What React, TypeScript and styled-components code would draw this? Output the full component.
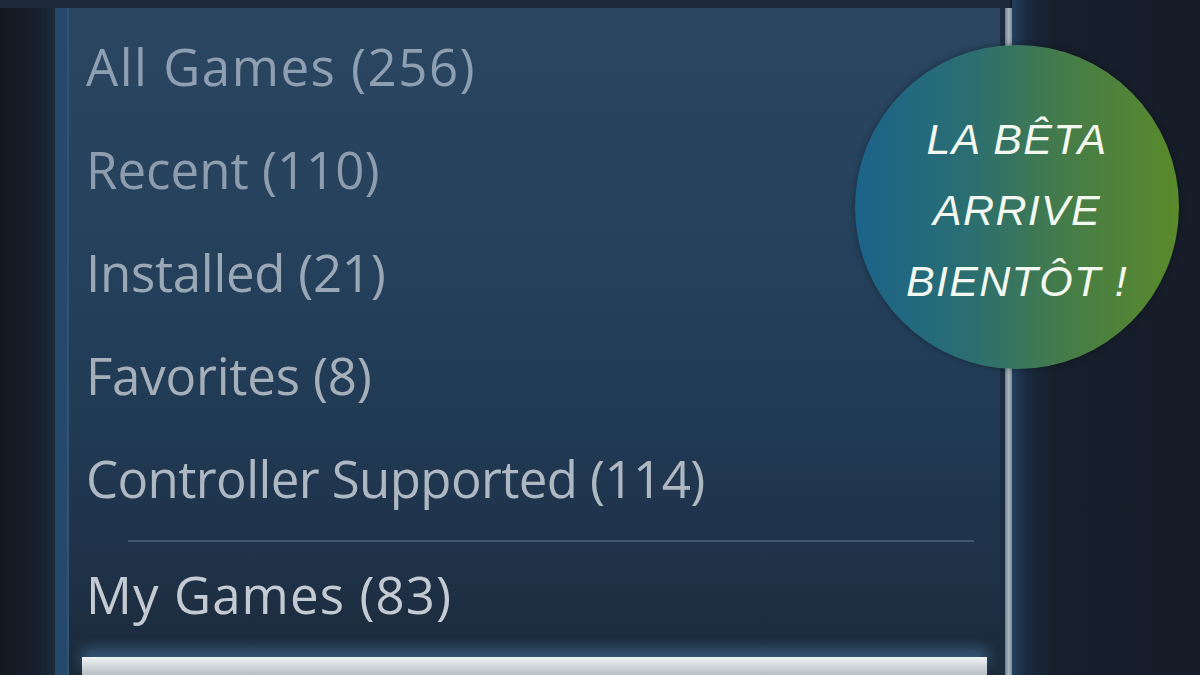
import styled, { createGlobalStyle } from "styled-components";

const GlobalStyle = createGlobalStyle`
    html, body {
        margin: 0;
        padding: 0;
        background: #141a24;
    }
`;

const Page = styled.div`
    position: relative;
    display: grid;
    grid-template-columns: 55px 945px 5px 7px 1fr;
    width: 1200px;
    height: 675px;
    overflow: hidden;
    background: #141a24;
    font-family: "Open Sans", "Noto Sans", sans-serif;
`;

const LeftGutter = styled.div`
    background: linear-gradient(90deg, #121821 0%, #17202d 70%, #1d2b3c 100%);
`;

const Panel = styled.section`
    display: flex;
    flex-direction: column;
    margin-top: 8px;
    padding: 6px 0 0 19px;
    border-left: 12px solid #26486a;
    box-shadow: inset 2px 0 0 #2e5478;
    background: linear-gradient(180deg, #2a4660 0%, #25415b 35%, #213b55 60%, #1f334a 80%, #1c2a3a 100%);
`;

const TopBand = styled.div`
    position: absolute;
    left: 0;
    top: 0;
    width: 1010px;
    height: 8px;
    background: #1f2b3a;
`;

const Row = styled.div<{ $tone: string; $spacing?: number }>`
    display: flex;
    align-items: center;
    height: 103px;
    font-size: 51px;
    letter-spacing: ${(p) => p.$spacing ?? 0}px;
    color: ${(p) => p.$tone};
    white-space: nowrap;
`;

const Separator = styled.hr`
    margin: 11px 26px 0 42px;
    border: none;
    height: 2px;
    background: #44586c;
`;

const Footer = styled.div`
    margin: auto 13px 0 -4px;
    height: 18px;
    background: linear-gradient(180deg, #f1f4f6 0%, #d9dde1 40%, #b9bec3 100%);
    box-shadow: 0 -8px 14px rgba(88, 150, 200, 0.45);
`;

const Gap = styled.div`
    background: linear-gradient(90deg, #1d2e42 0%, #1c2b3c 100%);
    margin-top: 8px;
`;

const Track = styled.div`
    margin-top: 8px;
    background: linear-gradient(90deg, #6f8090 0%, #a9b4be 50%, #7e8e9c 100%);
`;

const RightArea = styled.div`
    background: linear-gradient(90deg, #22405e 0%, #1a2a3e 8%, #171f2c 22%, #161d29 100%);
`;

const Badge = styled.div`
    position: absolute;
    left: 855px;
    top: 45px;
    width: 324px;
    height: 324px;
    padding-top: 6px;
    box-sizing: border-box;
    border-radius: 50%;
    display: flex;
    flex-direction: column;
    align-items: center;
    justify-content: center;
    background: linear-gradient(90deg, #1b6389 0%, #2a6e72 35%, #457c48 65%, #5a8a2a 100%);
    box-shadow: 0 0 6px rgba(0, 0, 0, 0.35);
`;

const BadgeLine = styled.span`
    display: block;
    font-family: "Liberation Sans", Arial, sans-serif;
    font-style: italic;
    font-size: 43px;
    line-height: 71px;
    letter-spacing: 1.3px;
    color: #f2f8ef;
`;

const categories = [
    { label: "All Games (256)", tone: "#8d9fb1", spacing: 1.5 },
    { label: "Recent (110)", tone: "#8e9dae", spacing: 0 },
    { label: "Installed (21)", tone: "#9aa8b6", spacing: -0.3 },
    { label: "Favorites (8)", tone: "#a4afba", spacing: -0.2 },
    { label: "Controller Supported (114)", tone: "#aeb8c2", spacing: -0.6 },
];

export default function App() {
    return (
        <>
            <GlobalStyle />
            <Page>
                <LeftGutter />
                <Panel>
                    {categories.map((c) => (
                        <Row key={c.label} $tone={c.tone} $spacing={c.spacing}>
                            {c.label}
                        </Row>
                    ))}
                    <Separator />
                    <Row $tone="#c4cad1" $spacing={1.1}>My Games (83)</Row>
                    <Footer />
                </Panel>
                <Gap />
                <Track />
                <RightArea />
                <TopBand />
                <Badge>
                    <BadgeLine>LA BÊTA</BadgeLine>
                    <BadgeLine>ARRIVE</BadgeLine>
                    <BadgeLine>BIENTÔT !</BadgeLine>
                </Badge>
            </Page>
        </>
    );
}
